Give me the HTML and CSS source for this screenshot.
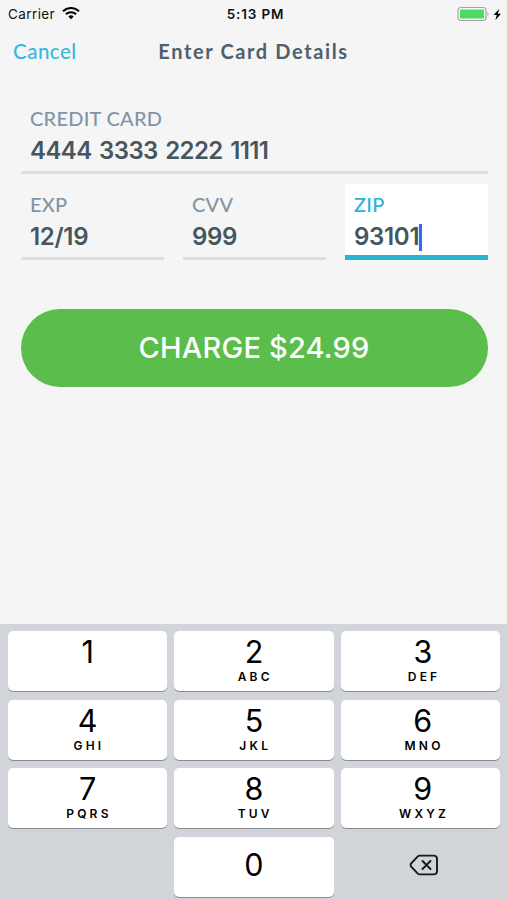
FILE: index.html
```html
<!DOCTYPE html>
<html lang="en">
<head>
<meta charset="utf-8">
<meta name="viewport" content="width=device-width">
<title>Enter Card Details</title>
<link rel="stylesheet" href="styles.css">
</head>
<body>
<div class="app">
  <div class="status">
    <div class="carrier"><span>Carrier</span>
      <svg class="wifi" width="18" height="13" viewBox="0 0 18 13" fill="none" stroke="#000" stroke-width="2.1"><path d="M1 4.300a11.400 11.400 0 0 1 16 0M3.900 7.300a7.300 7.300 0 0 1 10.200 0"/><path d="M6.300 9.500a3.900 3.900 0 0 1 5.400 0L9 12.200z" fill="#000" stroke="none"/></svg>
    </div>
    <div class="time">5:13 PM</div>
    <svg class="battery" width="45" height="16" viewBox="0 0 45 16"><rect x="1" y="1.5" width="28" height="13" rx="3" fill="#f8f8f8" stroke="#a5a5a7" stroke-width="1.2"/><rect x="3" y="3.5" width="24" height="9" rx="1" fill="#4cd964"/><path d="M30.5 5.7q2 2.300 0 4.600z" fill="#a5a5a7"/><path d="M42.300 2.800L36.600 9h3.200l-1.500 5.200L44 7.700h-3.200z" fill="#000"/></svg>
  </div>
  <header class="nav"><a class="cancel">Cancel</a><h1 class="title">Enter Card Details</h1></header>
  <main class="form">
    <div class="field card"><label class="label">CREDIT CARD</label><div class="value number"><span>4444</span><span>3333</span><span>2222</span><span class="ones">1111</span></div></div>
    <div class="row">
      <div class="field"><label class="label">EXP</label><div class="value">12/19</div></div>
      <div class="field"><label class="label">CVV</label><div class="value">999</div></div>
      <div class="field active"><label class="label">ZIP</label><div class="value">93101<i class="caret"></i></div></div>
    </div>
    <button class="charge">CHARGE $24.99</button>
  </main>
  <div class="keypad">
    <div class="key"><b>1</b></div>
    <div class="key"><b>2</b><small>ABC</small></div>
    <div class="key"><b>3</b><small>DEF</small></div>
    <div class="key"><b>4</b><small>GHI</small></div>
    <div class="key"><b>5</b><small>JKL</small></div>
    <div class="key"><b>6</b><small>MNO</small></div>
    <div class="key"><b>7</b><small>PQRS</small></div>
    <div class="key"><b>8</b><small>TUV</small></div>
    <div class="key"><b>9</b><small>WXYZ</small></div>
    <div class="blank"></div>
    <div class="key zero"><b>0</b></div>
    <div class="delete"><svg width="30" height="22" viewBox="0 0 30 22" fill="none" stroke="#15191d" stroke-width="1.9" stroke-linejoin="round" stroke-linecap="round"><path d="M10.600 1.600H25a3 3 0 0 1 3 3V17.400a3 3 0 0 1-3 3H10.600Q9.600 20.400 8.800 19.600L2.200 12.600Q1 11 2.200 9.400L8.800 2.400Q9.600 1.600 10.600 1.600zM13.500 7l8 8M21.500 7l-8 8"/></svg></div>
  </div>
</div>
</body>
</html>
```
FILE: styles.css
```css
* { box-sizing: border-box; }
body { margin: 0; background: #f5f5f5; font-family: Inter, "Liberation Sans", sans-serif; }
.app { width: 507px; height: 900px; display: flex; flex-direction: column; overflow: hidden; }
.status { height: 28px; display: grid; grid-template-columns: 1fr auto 1fr; align-items: center; padding: 0 5px 0 8px; font-size: 13.500px; line-height: 28px; color: #111; }
.carrier { display: flex; align-items: center; gap: 7px; letter-spacing: .4px; }
.wifi { margin-bottom: 1px; }
.time { font-weight: 600; letter-spacing: .85px; padding-left: 1px; }
.battery { justify-self: end; margin-bottom: 1px; }
.nav { height: 48px; display: grid; grid-template-columns: 1fr auto 1fr; align-items: center; padding: 0 13px; font-family: Lato, sans-serif; line-height: 44px; padding-bottom: 3px; }
.cancel { color: #38b9dc; font-size: 20.500px; font-weight: 500; letter-spacing: .5px; }
.title { margin: 0; color: #4f5f6d; font-size: 20px; font-weight: 700; letter-spacing: 1.620px; }
.form { flex: 1; padding: 22px 19.500px 0 20.500px; }
.field { height: 76px; padding: 8px 9.500px 0; border-bottom: 3px solid #dcdfe1; }
.label { display: block; font: 500 20px/24px Lato, sans-serif; letter-spacing: .25px; color: #8195a6; }
.value { display: flex; align-items: center; font-size: 24px; font-weight: 600; line-height: 30px; height: 30px; margin-top: 6px; color: #46565f; letter-spacing: -.3px; }
.number { gap: 7.500px; letter-spacing: -.6px; }
.row { display: grid; grid-template-columns: repeat(3, 1fr); gap: 19px; margin-top: 10px; }
.active { background: #fff; border-bottom: 5px solid #27b5d4; }
.active .label { color: #27b5d4; }
.caret { width: 3px; height: 27px; background: #3b65f0; }
.charge { display: block; width: 100%; height: 78px; margin-top: 49px; border: 0; border-radius: 39px; background: #5bbd4b; color: #fff; font: 500 29px/78px Inter, sans-serif; letter-spacing: .2px; padding: 0; }
.keypad { height: 276px; padding: 7px 7px 0 8px; background: #d1d5da; display: grid; grid-template-columns: repeat(3, 1fr); grid-auto-rows: 60px; gap: 8.500px 7px; align-content: start; color: #000; }
.key { background: #fff; border-radius: 5px; box-shadow: 0 1px 0 #898b8f; display: flex; flex-direction: column; align-items: center; padding-top: 3px; }
.key:nth-child(3n) { padding-left: 5px; }
.key b { font-weight: 400; font-size: 30.500px; line-height: 36px; }
.key small { font-size: 12px; font-weight: 600; line-height: 13px; letter-spacing: 3.200px; margin-right: -2.500px; }
.zero { padding-top: 10px; }
.delete { display: flex; align-items: center; justify-content: center; padding: 0 0 3px 8px; }
```
